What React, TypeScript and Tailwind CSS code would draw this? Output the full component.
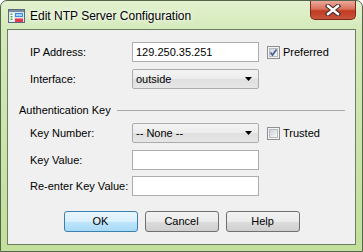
import React from 'react';

function TitleIcon() {
  return (
    <svg width="17" height="16" viewBox="0 0 17 16" className="shrink-0">
      <rect x="0.5" y="1.5" width="16" height="13" fill="#dfe6ee" stroke="#5a6a7a" />
      <rect x="1" y="2" width="15" height="2" fill="#7a8ca0" />
      <rect x="2" y="5" width="4" height="8" fill="#ffffff" />
      <rect x="2.5" y="5.5" width="2" height="1.5" fill="#3fae3f" />
      <rect x="2.5" y="8" width="2" height="1.5" fill="#3fae3f" />
      <rect x="2.5" y="10.5" width="2" height="1.5" fill="#3fae3f" />
      <rect x="7" y="5" width="8" height="4" fill="#3b8fd9" />
      <rect x="8" y="6" width="6" height="2" fill="#9fd2ff" />
      <rect x="7" y="10" width="8" height="4" fill="#e0394a" />
      <rect x="7" y="10" width="8" height="1" fill="#f08a94" />
    </svg>
  );
}

function CloseButton() {
  return (
    <div className="w-[46px] h-[19px] mr-[6px] rounded-b-[5px] border border-t-0 border-[#7a2a1c] bg-[linear-gradient(#e9a99a_0%,#d9705b_45%,#c23a22_55%,#c9553c_100%)] flex items-center justify-center">
      <svg width="16" height="12" viewBox="0 0 16 12">
        <path d="M3 2 L13 10 M13 2 L3 10" stroke="#3a2a2a" strokeWidth="4.4" strokeLinecap="square" />
        <path d="M3 2 L13 10 M13 2 L3 10" stroke="#ffffff" strokeWidth="2.4" strokeLinecap="square" />
      </svg>
    </div>
  );
}

function TextBox({ value }: { value?: string }) {
  return (
    <div className="w-[127px] h-[20px] border border-[#abadb3] bg-white flex items-center pl-[3px] text-[11px] text-black">
      {value}
    </div>
  );
}

function ComboBox({ value }: { value: string }) {
  return (
    <div className="w-[127px] h-[20px] border border-[#acacac] rounded-[2px] bg-[linear-gradient(#f4f4f4_0%,#ececec_50%,#dfdfdf_51%,#e6e6e6_100%)] flex items-center pl-[3px] pr-[6px] text-[11px] text-black">
      <span className="flex-1">{value}</span>
      <svg width="7" height="4" viewBox="0 0 7 4">
        <path d="M0 0 H7 L3.5 4 Z" fill="#000" />
      </svg>
    </div>
  );
}

function CheckBox({ checked, label }: { checked?: boolean; label: string }) {
  return (
    <div className="flex items-center ml-[8px] gap-[3px] pt-[1px]">
      <div className="w-[13px] h-[13px] border border-[#8e8f8f] bg-[#f4f4f4] p-[1px]">
        <div className="w-full h-full border border-[#b8bcc2] bg-[linear-gradient(135deg,#cfd3d9,#f6f6f6)] relative">
          {checked && (
            <svg width="9" height="9" viewBox="0 0 9 9" className="absolute -left-[1px] -top-[1px]">
              <path d="M1.5 4.5 L3.5 7 L7.5 1.5" stroke="#4a5e9a" strokeWidth="1.7" fill="none" />
            </svg>
          )}
        </div>
      </div>
      <span className="text-[11px]">{label}</span>
    </div>
  );
}

function Row({ label, children }: { label: string; children: React.ReactNode }) {
  return (
    <div className="flex items-center h-[20px] pl-[22px]">
      <span className="w-[102px] text-[11px]">{label}</span>
      {children}
    </div>
  );
}

function Button({ label, primary }: { label: string; primary?: boolean }) {
  return (
    <div
      className={
        primary
          ? 'w-[74px] h-[21px] rounded-[3px] border border-[#3c7fb1] bg-[linear-gradient(#eaf6fd_0%,#d9f0fc_50%,#bee6fd_51%,#a7d9f5_100%)] flex items-center justify-center text-[11px]'
          : 'w-[74px] h-[21px] rounded-[3px] border border-[#707070] bg-[linear-gradient(#f2f2f2_0%,#ebebeb_50%,#dddddd_51%,#cfcfcf_100%)] flex items-center justify-center text-[11px]'
      }
    >
      {label}
    </div>
  );
}

export default function App() {
  return (
    <div
      className="w-[363px] h-[252px] flex flex-col rounded-t-[7px] border border-[#55654c] bg-[linear-gradient(#e2f1cf_0%,#d3eab8_12%,#c2df9b_100%)] text-black"
      style={{ fontFamily: '"Liberation Sans", Arial, sans-serif' }}
    >
      <div className="h-[28px] flex items-start shrink-0">
        <div className="flex items-center pl-[7px] pt-[6px] gap-[5px]">
          <TitleIcon />
          <span className="text-[12px] text-black [text-shadow:0_0_6px_#ffffff,0_0_3px_#ffffff]">Edit NTP Server Configuration</span>
        </div>
        <div className="ml-auto">
          <CloseButton />
        </div>
      </div>

      <div className="flex-1 mx-[6px] mb-[6px] border border-[#6d7c62] bg-[#f0f0f0] flex flex-col pt-[12px]">
        <Row label="IP Address:">
          <TextBox value="129.250.35.251" />
          <CheckBox checked label="Preferred" />
        </Row>
        <div className="mt-[7px]">
          <Row label="Interface:">
            <ComboBox value="outside" />
          </Row>
        </div>

        <div className="mt-[14px] h-[14px] flex items-center pl-[11px] pr-[10px] gap-[6px]">
          <span className="text-[11px]">Authentication Key</span>
          <div className="flex-1 h-px bg-[#a8a8a8]" />
        </div>

        <div className="mt-[6px]">
          <Row label="Key Number:">
            <ComboBox value="-- None --" />
            <CheckBox label="Trusted" />
          </Row>
        </div>
        <div className="mt-[7px]">
          <Row label="Key Value:">
            <TextBox />
          </Row>
        </div>
        <div className="mt-[6px]">
          <Row label="Re-enter Key Value:">
            <TextBox />
          </Row>
        </div>

        <div className="mt-[15px] flex justify-center gap-[7px]">
          <Button label="OK" primary />
          <Button label="Cancel" />
          <Button label="Help" />
        </div>
      </div>
    </div>
  );
}
